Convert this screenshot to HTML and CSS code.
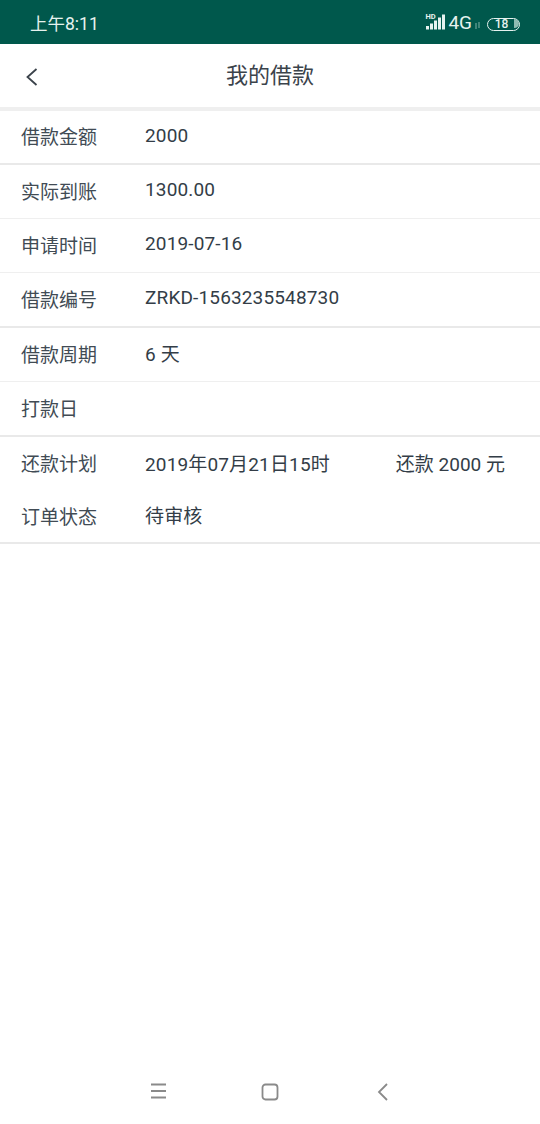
FILE: index.html
```html
<!DOCTYPE html>
<html lang="zh-CN">
<head>
  <meta charset="UTF-8">
  <meta name="viewport" content="width=device-width, initial-scale=1.0">
  <title>我的借款</title>
  <link rel="stylesheet" href="styles.css">
</head>
<body>
  <div id="app">
    <div class="status-bar">
      <span class="status-time">上午8:11</span>
      <div class="status-icons">
        <svg class="signal" width="22" height="18" viewBox="0 0 22 18">
          <text x="0.5" y="6" class="hd">HD</text>
          <rect x="1" y="13" width="3" height="3.5" />
          <rect x="5" y="10.5" width="3" height="6" />
          <rect x="9" y="7.5" width="3" height="9" />
          <rect x="13" y="4.5" width="3" height="12" />
          <rect x="17" y="1.5" width="3" height="15" />
        </svg>
        <span class="net">4G</span>
        <svg class="arrows" width="6" height="7" viewBox="0 0 6 7">
          <rect x="0.5" y="1" width="1" height="6" />
          <rect x="3.5" y="0" width="1" height="6" />
        </svg>
        <div class="battery"><span>18</span></div>
      </div>
    </div>

    <div class="nav-bar">
      <svg class="nav-back" width="14" height="20" viewBox="0 0 14 20">
        <path d="M11.5 2 L2.5 10 L11.5 18" />
      </svg>
      <span class="nav-title">我的借款</span>
    </div>

    <div class="info-list">
      <div class="row row-strong row-first"><span class="label">借款金额</span><span class="value">2000</span></div>
      <div class="row"><span class="label">实际到账</span><span class="value">1300.00</span></div>
      <div class="row"><span class="label">申请时间</span><span class="value">2019-07-16</span></div>
      <div class="row row-strong"><span class="label">借款编号</span><span class="value">ZRKD-1563235548730</span></div>
      <div class="row"><span class="label">借款周期</span><span class="value">6 天</span></div>
      <div class="row row-strong"><span class="label">打款日</span></div>
      <div class="row row-plain">
        <span class="label">还款计划</span>
        <span class="value">2019年07月21日15时</span>
        <span class="value-right">还款 2000 元</span>
      </div>
      <div class="row row-strong row-last"><span class="label">订单状态</span><span class="value">待审核</span></div>
    </div>

    <div class="bottom-nav">
      <svg width="17" height="16" viewBox="0 0 17 16">
        <path d="M1 1.5 H16 M1 8 H16 M1 14.5 H16" />
      </svg>
      <svg width="18" height="18" viewBox="0 0 18 18">
        <rect x="1.5" y="1.5" width="15" height="15" rx="3" />
      </svg>
      <svg class="nav-key-back" width="12" height="18" viewBox="0 0 12 18">
        <path d="M10 1 L2 9 L10 17" />
      </svg>
    </div>
  </div>
</body>
</html>
```

FILE: styles.css
```css
* {
  box-sizing: border-box;
}

body {
  margin: 0;
  background: #fff;
  font-family: Roboto, "Noto Sans CJK SC", sans-serif;
  color: #333d47;
}

#app {
  height: 1124px;
  display: flex;
  flex-direction: column;
  overflow: hidden;
}

.status-bar {
  height: 44px;
  background: #00584c;
  color: #e6f2ef;
  display: flex;
  align-items: center;
  justify-content: space-between;
  padding: 0 20px 0 30px;
}

.status-time {
  font-size: 17.5px;
  margin-top: 1px;
}

.status-icons {
  display: flex;
  align-items: center;
}

.signal {
  fill: #e6f2ef;
  margin-top: -1px;
}

.hd {
  font-size: 7.5px;
  font-weight: 700;
}

.net {
  font-size: 19px;
  margin-left: 1px;
}

.arrows {
  fill: #7fb0a6;
  margin: 6px 6px 0 3px;
}

.battery {
  position: relative;
  width: 33px;
  height: 13px;
  margin-top: 4px;
  border: 1.5px solid #e6f2ef;
  border-radius: 7px;
  font-size: 12px;
  font-weight: 500;
  line-height: 10px;
  text-align: center;
  padding-right: 4px;
}

.battery::after {
  content: "";
  position: absolute;
  right: 0.5px;
  top: 0.5px;
  width: 5px;
  height: 9px;
  border-radius: 0 5px 5px 0;
  background: #8fbcb2;
}

.nav-bar {
  height: 67px;
  flex: none;
  display: flex;
  align-items: center;
  justify-content: center;
  position: relative;
  border-bottom: 4px solid #efefef;
}

.nav-back {
  position: absolute;
  left: 25px;
  top: 23px;
  fill: none;
  stroke: #3b434b;
  stroke-width: 1.8;
}

.nav-title {
  font-size: 22px;
  color: #3b434b;
  margin-bottom: 5px;
}

.row {
  height: 54px;
  display: flex;
  align-items: center;
  padding-left: 21px;
  border-bottom: 1px solid #efefef;
  font-size: 19px;
  flex: none;
}

.row-strong {
  height: 55px;
  border-bottom: 2px solid #e9e9e9;
}

.row-first {
  height: 54px;
}

.row-plain {
  border-bottom: none;
}

.row-last {
  height: 53px;
}

.label {
  width: 124px;
  flex: none;
  color: #414b54;
  padding-bottom: 3px;
}

.value {
  letter-spacing: 0.15px;
  padding-bottom: 4px;
}

.value-right {
  margin-left: auto;
  margin-right: 35px;
  padding-bottom: 4px;
}

.info-list {
  flex: none;
}

.bottom-nav {
  margin-top: auto;
  height: 58px;
  display: flex;
  align-items: flex-start;
  padding: 17px 0 0 150px;
  gap: 94px;
}

.bottom-nav svg {
  flex: none;
  fill: none;
  stroke: #8a8a8a;
  stroke-width: 1.8;
}

.bottom-nav .nav-key-back {
  margin-left: 4px;
}
```
